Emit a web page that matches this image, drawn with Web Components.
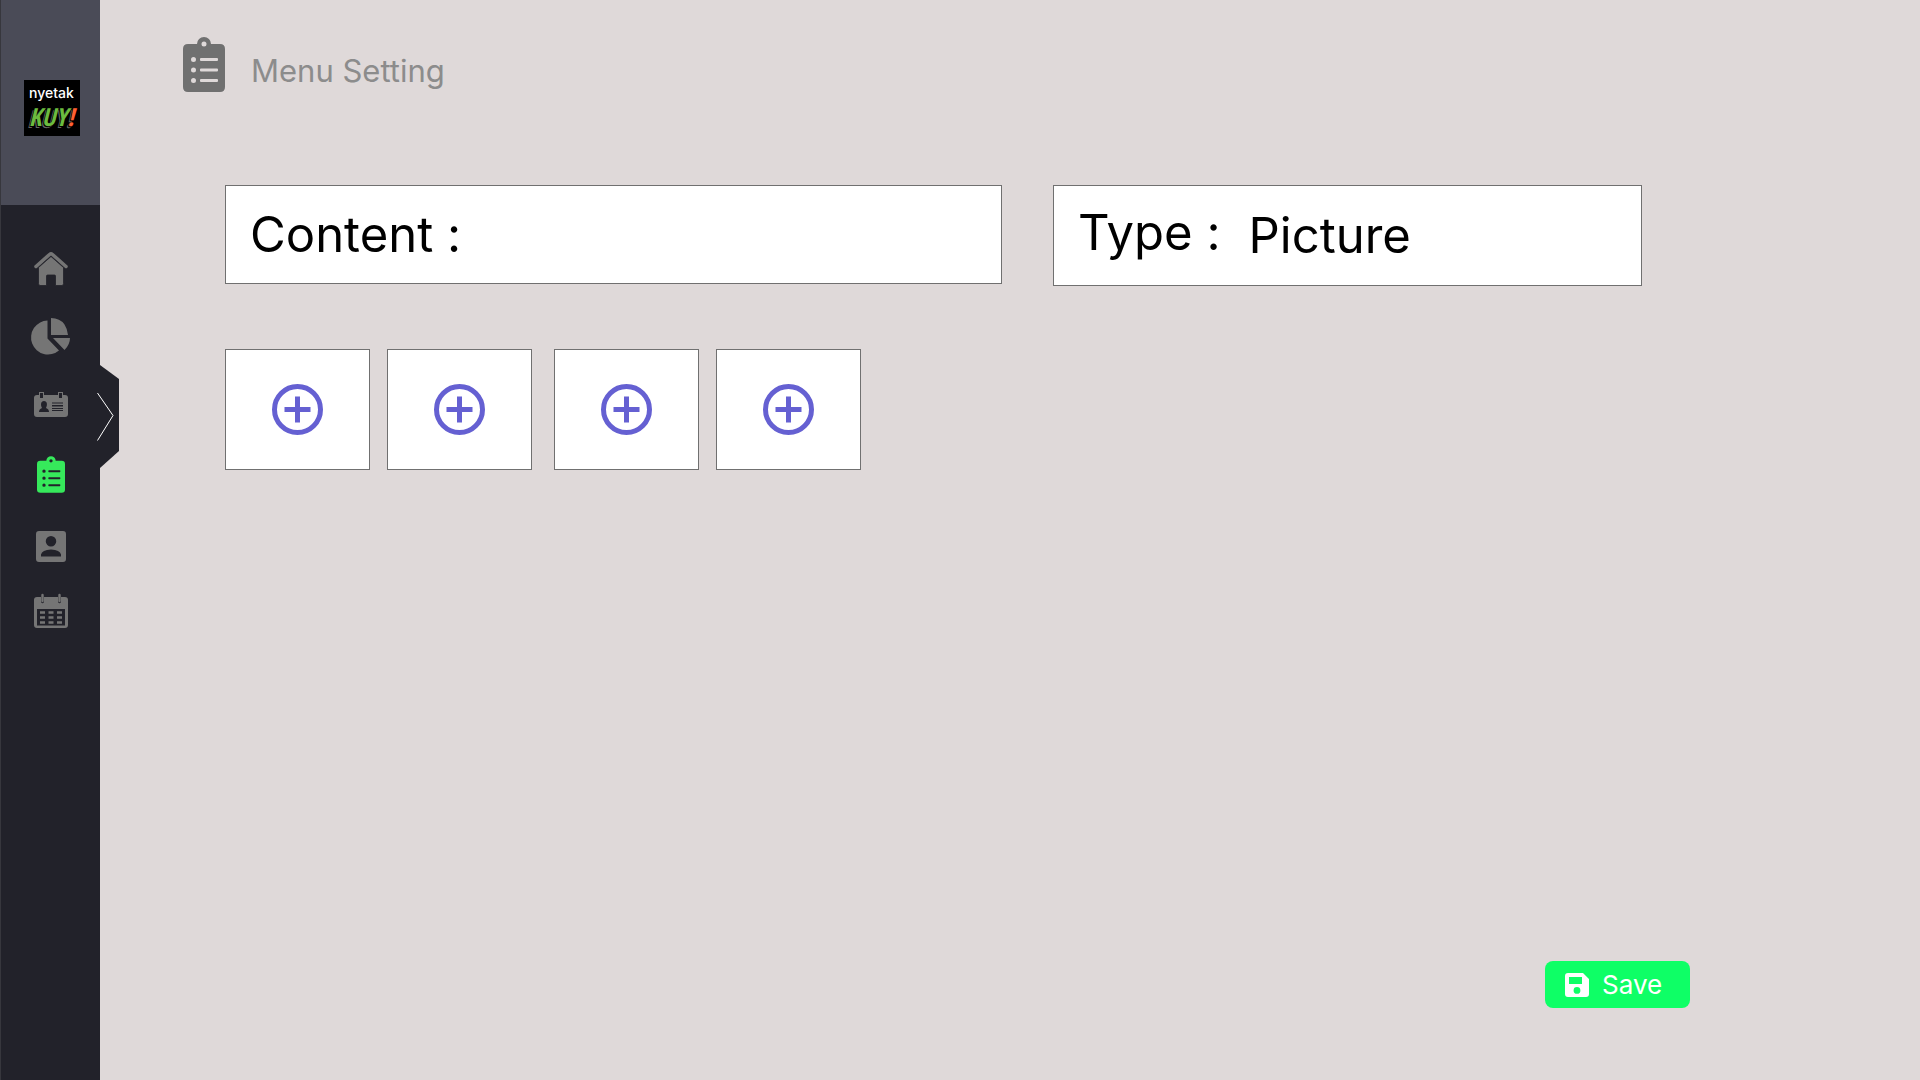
<!DOCTYPE html>
<html lang="en">
<head>
<meta charset="utf-8">
<title>Menu Setting</title>
<style>
  body { margin: 0; background: #dfd9d9; font-family: Inter, "Open Sans", sans-serif; color: #000; }
</style>
</head>
<body>
<menu-setting-page></menu-setting-page>
<script>
const clipboard = `<path fill="currentColor" fill-rule="evenodd" d="M5 7H14A7 7 0 0 1 28 7H37Q42 7 42 12V50Q42 55 37 55H5Q0 55 0 50V12Q0 7 5 7ZM21 4.500A2.500 2.500 0 1 0 21 9.500A2.500 2.500 0 1 0 21 4.500ZM10.500 20A2.500 2.500 0 1 0 10.500 25A2.500 2.500 0 1 0 10.500 20ZM10.500 30.500A2.500 2.500 0 1 0 10.500 35.500A2.500 2.500 0 1 0 10.500 30.500ZM10.500 41A2.500 2.500 0 1 0 10.500 46A2.500 2.500 0 1 0 10.500 41ZM18 21H34Q35 21 35 22V23Q35 24 34 24H18Q17 24 17 23V22Q17 21 18 21ZM18 31.500H34Q35 31.500 35 32.500V33.500Q35 34.500 34 34.500H18Q17 34.500 17 33.500V32.500Q17 31.500 18 31.500ZM18 42H34Q35 42 35 43V44Q35 45 34 45H18Q17 45 17 44V43Q17 42 18 42Z"/>`;

/* name: [viewBox width, viewBox height, markup] */
const ICONS = {
  clipboard: [42, 55, clipboard],
  home: [34, 34, `<path d="M2 14.500L15.500 2.500Q17 1.300 18.500 2.500L32 14.500" fill="none" stroke="currentColor" stroke-width="3.500" stroke-linecap="round" stroke-linejoin="round"/><path fill="currentColor" stroke="#22222a" stroke-width=".8" d="M4.500 15.500L17 4.500L29.500 15.500V31.500Q29.500 33.500 28 33.500H21.500V24Q21.500 23 20.500 23H13.500Q12.500 23 12.500 24V33.500H6Q4.500 33.500 4.500 31.500Z"/>`],
  pie: [38, 36, `<path fill="currentColor" d="M15.500 2.500V20.500L27 32.500A17 17 0 1 1 15.500 2.500ZM19 0Q28 0 32.500 6.500Q35.500 11 36 17H19ZM21 20H38Q38 26.500 32.500 32Z"/>`],
  card: [34, 26, `<path fill="currentColor" fill-rule="evenodd" d="M3 3H5V0H10V3H24V0H29V3H31Q34 3 34 6V22Q34 25 31 25H3Q0 25 0 22V6Q0 3 3 3ZM6 1V6H9V1ZM25 1V6H28V1ZM18 10.500V11.500H29V10.500ZM18 13V14.500H29V13ZM18 16V17H29V16ZM18 18V19H29V18ZM10 9C6.500 9 6.500 13 8 16Q5 17 5 20H15Q15 17 12 16C13.500 13 13.500 9 10 9Z"/>`],
  account: [30, 31, `<path fill="currentColor" fill-rule="evenodd" d="M3 0H27Q30 0 30 3V28Q30 31 27 31H3Q0 31 0 28V3Q0 0 3 0ZM15 5A5 5 0 1 0 15 15.500A5 5 0 1 0 15 5ZM5 25.500H25V23.500Q24 19 15 18.500Q6 19 5 23.500Z"/>`],
  calendar: [34, 34, `<path fill="currentColor" fill-rule="evenodd" d="M3 3H7V8Q8.500 10.500 10 8V3H24V8Q25.500 10.500 27 8V3H31Q34 3 34 6V31Q34 34 31 34H3Q0 34 0 31V6Q0 3 3 3ZM3 15V31.500H31V15Z"/><path d="M8.500 1V7M25.500 1V7" stroke="currentColor" stroke-width="2.400" stroke-linecap="round"/><path d="M6 18.500H11M14.500 18.500H19.500M23 18.500H28M6 23.500H11M14.500 23.500H19.500M23 23.500H28M6 28.500H11M14.500 28.500H19.500M23 28.500H28" stroke="currentColor" stroke-width="2.600"/>`],
  plus: [51, 51, `<path d="M25.500 2.500A23 23 0 1 1 25.500 48.500A23 23 0 1 1 25.500 2.500M25.500 12.500V38.500M12.500 25.500H38.500" fill="none" stroke="currentColor" stroke-width="5"/>`],
  save: [24, 24, `<path fill="currentColor" fill-rule="evenodd" d="M3 0H18L24 6V21Q24 24 21 24H3Q0 24 0 21V3Q0 0 3 0ZM4 4V11H17V4ZM12 14A3.400 3.400 0 1 0 12 20.800A3.400 3.400 0 1 0 12 14Z"/>`]
};

function define(name, render) {
  customElements.define(name, class extends HTMLElement {
    constructor() {
      super();
      this.attachShadow({ mode: 'open' });
    }
    connectedCallback() {
      this.shadowRoot.innerHTML = render(this);
    }
  });
}

define('ui-icon', el => {
  const [w, h, markup] = ICONS[el.getAttribute('name')];
  const size = el.getAttribute('width') || w;
  return `<style>:host{display:block;flex:none} svg{display:block;overflow:visible}</style>
    <svg width="${size}" height="${Math.round(size * h / w)}" viewBox="0 0 ${w} ${h}" aria-hidden="true">${markup}</svg>`;
});

define('brand-logo', () => `
  <style>
    :host{display:flex;flex-direction:column;align-items:center;width:56px;height:56px;background:#000;color:#fff}
    .top{font:500 14px/16px Inter,sans-serif;padding-top:5px}
    .kuy{font:italic 700 25px/30px "Open Sans Condensed","Roboto Condensed",sans-serif;color:#6cbb3f;text-shadow:-1px 1px 0 #000,-2px 2px 0 #666}
    .kuy b{color:#ff6033}
  </style>
  <span class="top">nyetak</span>
  <span class="kuy">KUY<b>!</b></span>`);

define('side-bar', () => `
  <style>
    :host{display:flex;flex-direction:column;position:relative;width:100px;box-sizing:border-box;background:#22222a;border-left:1px solid #37373d}
    header{height:205px;display:flex;align-items:center;justify-content:center;background:#4a4b57;padding:11px 0 0 2px;box-sizing:border-box}
    nav{display:flex;flex-direction:column;align-items:center;gap:32px;padding:47px 0 0 1px;color:#757575}
    a{display:block;color:inherit}
    .spaced{margin-top:6px}
    a[aria-current]{color:#36e95b}
    button{position:absolute;left:94px;top:365px;width:25px;height:103px;padding:0;border:0;background:none;cursor:pointer}
    button svg{display:block}
  </style>
  <header><brand-logo></brand-logo></header>
  <nav aria-label="Main">
    <a href="#home" aria-label="Home"><ui-icon name="home"></ui-icon></a>
    <a href="#reports" aria-label="Reports"><ui-icon name="pie"></ui-icon></a>
    <a href="#cards" aria-label="Cards" class="spaced"><ui-icon name="card"></ui-icon></a>
    <a href="#menu" aria-label="Menu setting" aria-current="page" class="spaced"><ui-icon name="clipboard" width="28"></ui-icon></a>
    <a href="#account" aria-label="Account" class="spaced"><ui-icon name="account"></ui-icon></a>
    <a href="#calendar" aria-label="Calendar"><ui-icon name="calendar"></ui-icon></a>
  </nav>
  <button type="button" aria-label="Expand sidebar"><svg width="25" height="103" viewBox="0 0 25 103">
    <path fill="#22222a" d="M0 0H5L24 14V86L5 103H0Z"/><path fill="none" stroke="#fff" d="M2.500 28L18 50.500L2.500 75.500"/></svg></button>`);

define('page-title', () => `
  <style>
    :host{display:flex;align-items:center;gap:26px;color:#707070}
    h1{margin:0;padding-top:12px;font-weight:400;font-size:31px;line-height:40px;color:#8c8c8c}
  </style>
  <ui-icon name="clipboard"></ui-icon><h1><slot></slot></h1>`);

define('form-field', el => {
  const options = el.getAttribute('options');
  return `
  <style>
    :host{display:block;min-width:0}
    div{display:flex;gap:28px;padding:0 24px;background:#fff;border:1px solid #707070;font-size:49px}
    label{flex:none;line-height:97px}
    input,select{flex:1;min-width:0;width:0;height:97px;margin:0;padding:0;border:0;outline:0;background:none;appearance:none;font:inherit;color:inherit}
    .choice label{line-height:93px}
    .choice select{height:99px}
  </style>
  <div class="${options ? 'choice' : 'entry'}"><label for="control"><slot></slot></label>
  ${options ? `<select id="control">${options.split(',').map(o => `<option>${o}</option>`).join('')}</select>` : '<input id="control" type="text">'}</div>`;
});

define('add-tile', () => `
  <style>
    :host{display:block}
    button{display:flex;align-items:center;justify-content:center;width:145px;height:121px;padding:0;background:#fff;border:1px solid #707070;color:#6560d2;cursor:pointer}
  </style>
  <button type="button" aria-label="Add picture"><ui-icon name="plus"></ui-icon></button>`);

define('save-button', () => `
  <style>
    :host{display:block}
    button{display:flex;align-items:center;gap:13px;width:145px;height:47px;padding:0 20px;border:0;border-radius:8px;background:#0eff66;color:#fff;font:400 26px/32px Inter,sans-serif;cursor:pointer}
  </style>
  <button type="submit"><ui-icon name="save"></ui-icon><slot></slot></button>`);

define('menu-setting-page', () => `
  <style>
    :host{display:grid;grid-template-columns:100px 1fr;min-height:100vh}
    main{display:flex;flex-direction:column;padding:37px 230px 72px 83px}
    .fields{display:grid;grid-template-columns:777fr 589fr;align-items:start;gap:51px;margin:93px 48px 0 42px}
    .tiles{display:flex;gap:22px;margin:63px 0 0 42px}
    .pair{display:flex;gap:17px}
    save-button{margin-top:auto;align-self:flex-end}
  </style>
  <side-bar></side-bar>
  <main>
    <page-title>Menu Setting</page-title>
    <div class="fields">
      <form-field>Content :</form-field>
      <form-field options="Picture">Type :</form-field>
    </div>
    <div class="tiles">
      <div class="pair"><add-tile></add-tile><add-tile></add-tile></div>
      <div class="pair"><add-tile></add-tile><add-tile></add-tile></div>
    </div>
    <save-button>Save</save-button>
  </main>`);
</script>
</body>
</html>
